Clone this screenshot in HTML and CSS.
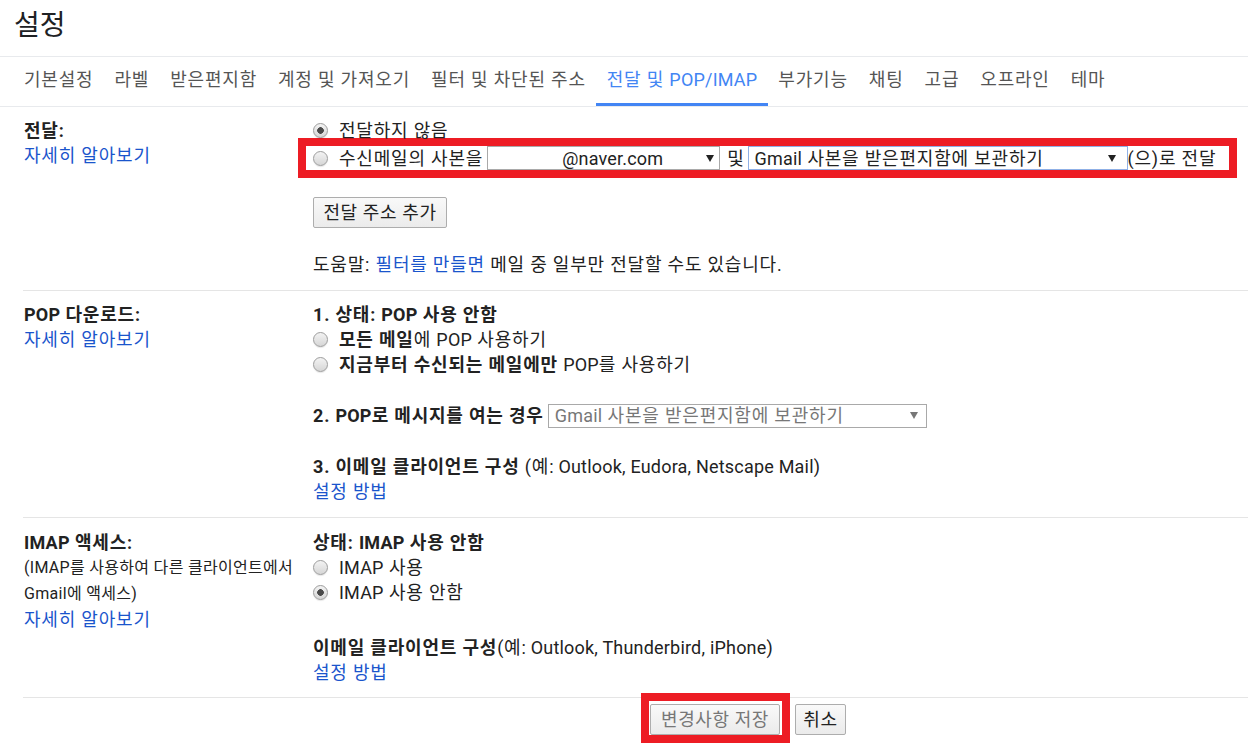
FILE: index.html
```html
<!DOCTYPE html>
<html lang="ko">
<head>
<meta charset="utf-8">
<title>설정</title>
<link rel="stylesheet" href="styles.css">
</head>
<body>
<header class="page-head"><h1 class="page-title">설정</h1></header>
<nav class="tabs">
  <a class="tab">기본설정</a>
  <a class="tab">라벨</a>
  <a class="tab">받은편지함</a>
  <a class="tab">계정 및 가져오기</a>
  <a class="tab">필터 및 차단된 주소</a>
  <a class="tab tab-active">전달 및 <span class="en">POP/IMAP</span></a>
  <a class="tab">부가기능</a>
  <a class="tab">채팅</a>
  <a class="tab">고급</a>
  <a class="tab">오프라인</a>
  <a class="tab">테마</a>
</nav>
<main class="settings">
  <section class="sec sec-fwd">
    <div class="sec-label">
      <div class="label-title">전달:</div>
      <a class="link">자세히 알아보기</a>
    </div>
    <div class="sec-body">
      <div class="opt"><span class="radio checked"></span><span>전달하지 않음</span></div>
      <div class="mark mark-fwd">
        <div class="opt opt-fwd">
          <span class="radio"></span>
          <span>수신메일의 사본을</span>
          <span class="select select-addr"><span class="select-text en">@naver.com</span><span class="caret"></span></span>
          <span class="and">및</span>
          <span class="select select-action"><span class="select-text"><span class="en">Gmail</span> 사본을 받은편지함에 보관하기</span><span class="caret"></span></span>
          <span>(으)로 전달</span>
        </div>
      </div>
      <button class="btn btn-add">전달 주소 추가</button>
      <p class="help">도움말: <a class="link">필터를 만들면</a> 메일 중 일부만 전달할 수도 있습니다.</p>
    </div>
  </section>

  <section class="sec sec-pop">
    <div class="sec-label">
      <div class="label-title"><span class="en">POP</span> 다운로드:</div>
      <a class="link">자세히 알아보기</a>
    </div>
    <div class="sec-body">
      <div class="line bold">1. 상태: <span class="en">POP</span> 사용 안함</div>
      <div class="opt"><span class="radio"></span><span><b>모든 메일</b>에 <span class="en">POP</span> 사용하기</span></div>
      <div class="opt"><span class="radio"></span><span><b>지금부터 수신되는 메일에만</b> <span class="en">POP</span>를 사용하기</span></div>
      <div class="line row-select gap-top">
        <b>2. <span class="en">POP</span>로 메시지를 여는 경우</b>
        <span class="select select-pop"><span class="select-text"><span class="en">Gmail</span> 사본을 받은편지함에 보관하기</span><span class="caret"></span></span>
      </div>
      <div class="line gap-top"><b>3. 이메일 클라이언트 구성</b> (예<span class="en">: Outlook, Eudora, Netscape Mail)</span></div>
      <a class="link line">설정 방법</a>
    </div>
  </section>

  <section class="sec sec-imap">
    <div class="sec-label">
      <div class="label-title"><span class="en">IMAP</span> 액세스:</div>
      <div class="small">(IMAP를 사용하여 다른 클라이언트에서<br>Gmail에 액세스)</div>
      <a class="link">자세히 알아보기</a>
    </div>
    <div class="sec-body">
      <div class="line bold">상태: <span class="en">IMAP</span> 사용 안함</div>
      <div class="opt"><span class="radio"></span><span><span class="en">IMAP</span> 사용</span></div>
      <div class="opt"><span class="radio checked"></span><span><span class="en">IMAP</span> 사용 안함</span></div>
      <div class="line gap-top-lg"><b>이메일 클라이언트 구성</b>(예<span class="en">: Outlook, Thunderbird, iPhone)</span></div>
      <a class="link line">설정 방법</a>
    </div>
  </section>

  <div class="actions">
    <div class="mark mark-save"><button class="btn btn-save">변경사항 저장</button></div>
    <button class="btn btn-cancel">취소</button>
  </div>
</main>
</body>
</html>
```

FILE: styles.css
```css
* { box-sizing: border-box; }
html, body { margin: 0; padding: 0; background: #fff; }
body {
  font-family: Roboto, "Noto Sans CJK KR", sans-serif;
  font-size: 18px;
  letter-spacing: 0.8px;
  line-height: 25px;
  color: #222;
}
.en { letter-spacing: 0.2px; }
b, .bold { font-weight: 700; }

.page-head {
  height: 57px;
  border-bottom: 1px solid #e8eaed;
  padding-left: 14px;
}
.page-title {
  margin: 0;
  font-size: 28px;
  font-weight: 400;
  letter-spacing: 0;
  line-height: 52px;
  color: #202124;
}

.tabs {
  display: flex;
  height: 50px;
  border-bottom: 1px solid #e8eaed;
  padding-left: 13.5px;
}
.tab {
  padding: 0 10.5px;
  height: 49px;
  line-height: 46px;
  border-bottom: 3px solid transparent;
  color: #555;
  text-decoration: none;
  white-space: nowrap;
}
.tab-active {
  color: #4285f4;
  border-bottom-color: #4285f4;
}

.sec {
  display: grid;
  grid-template-columns: 290px 1fr;
  margin-left: 23px;
  border-bottom: 1px solid #e5e5e5;
  padding: 11px 0 13px;
}
.sec-imap { padding: 12px 0 12px; }
.sec-label { padding-left: 1px; }
.label-title { font-weight: 700; }
.link { color: #1a55cc; text-decoration: none; display: inline-block; }
.line { display: block; }
.small { font-size: 16px; letter-spacing: 0.3px; line-height: 26px; color: #222; }

.opt {
  display: flex;
  align-items: center;
  height: 25px;
  white-space: nowrap;
}
.radio {
  flex: none;
  width: 15px;
  height: 15px;
  margin-right: 11px;
  border-radius: 50%;
  border: 1px solid #9d9d9d;
  background: linear-gradient(#f3f3f3, #d6d6d6);
  box-shadow: 0 1px 1px rgba(0,0,0,0.1);
}
.radio.checked {
  background: radial-gradient(circle, #4a4a4a 0 3px, transparent 3.6px), linear-gradient(#f3f3f3, #d6d6d6);
}

.mark { border: 8px solid #ed1c24; background: #fff; }
.mark-fwd {
  width: 939px;
  margin: -5px 0 0 -15px;
}
.opt-fwd {
  height: 24px;
  padding-left: 7px;
}
.select {
  display: flex;
  align-items: center;
  justify-content: space-between;
  height: 24px;
  border: 1px solid #a9a9a9;
  background: #fff;
  white-space: nowrap;
  flex: none;
}
.select-addr { width: 233px; margin-left: 4px; padding: 0 5px 0 74px; }
.select-action { width: 380px; padding: 0 11px 0 6px; border-color: #8fb0e6; }
.and { margin: 0 3px 0 7px; }
.caret {
  width: 0;
  height: 0;
  border-left: 4px solid transparent;
  border-right: 4px solid transparent;
  border-top: 7px solid #222;
}
.select-pop { width: 379px; margin-left: 4px; padding: 0 8px 0 6px; color: #777; font-weight: 400; }
.select-pop .caret { border-top-color: #777; }

.row-select { display: flex; align-items: center; }
.gap-top { margin-top: 26px; }
.gap-top-lg { margin-top: 30px; }

.btn {
  display: block;
  height: 31px;
  font-family: Roboto, "Noto Sans CJK KR", sans-serif;
  font-size: 18px;
  letter-spacing: 0.6px;
  line-height: 29px;
  color: #222;
  border: 1px solid #adadad;
  border-radius: 2px;
  background: linear-gradient(#f9f9f9, #ebebeb);
  padding: 0 9px;
  white-space: nowrap;
}
.btn-add { margin-top: 19px; width: 134px; padding: 0; }
.help { margin: 24px 0 0; }

.actions {
  display: flex;
  align-items: flex-start;
  padding-left: 641px;
}
.mark-save {
  margin-top: -5px;
  padding: 3px 2px 0 1px;
}
.btn-save { width: 130px; padding: 0; color: #777; }
.btn-cancel { width: 51px; padding: 0; margin: 6px 0 0 5px; }
```
